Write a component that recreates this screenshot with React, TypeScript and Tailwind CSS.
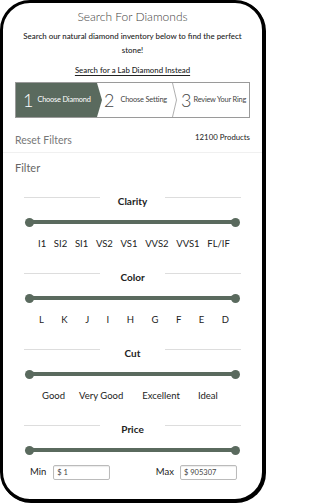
import React from "react";

const GREEN = "#5a6a5e";

function Header({ title }: { title: string }) {
  return (
    <div className="mx-[9px] flex items-center">
      <div className="h-px w-[76px] bg-[#dddddd] -translate-y-[3px]" />
      <div className="flex-1 text-center text-[10px] leading-[14px] font-bold text-[#222]">{title}</div>
      <div className="h-px w-[76px] bg-[#dddddd] -translate-y-[3px]" />
    </div>
  );
}

function Slider() {
  return (
    <div className="mx-[10px] mt-[9.5px] flex h-[10px] items-center">
      <div className="h-[9px] w-[9px] shrink-0 rounded-full bg-[#5a6a5e]" />
      <div className="-mx-[2px] h-[4px] flex-1 bg-[#5a6a5e]" />
      <div className="h-[9px] w-[9px] shrink-0 rounded-full bg-[#5a6a5e]" />
    </div>
  );
}

export default function App() {
  const clarity = ["I1", "SI2", "SI1", "VS2", "VS1", "VVS2", "VVS1", "FL/IF"];
  const color = ["L", "K", "J", "I", "H", "G", "F", "E", "D"];
  return (
    <div className="h-[504px] w-[267px] bg-white" style={{ fontFamily: "Lato, 'Open Sans', sans-serif" }}>
      <div className="h-[502px] w-[265px] overflow-hidden rounded-[30px] border-[3px] border-black bg-white px-[12px] shadow-[1px_1px_0_#000]">
        <div className="pt-[5px] text-center text-[12px] font-light leading-[18px] text-[#444]">Search For Diamonds</div>
        <div className="mt-[3px] px-[4px] text-center text-[7.9px] font-medium leading-[14px] text-[#222]">
          Search our natural diamond inventory below to find the perfect stone!
        </div>
        <div className="mt-[6px] text-center text-[7.8px] font-medium leading-[14px] text-[#222] underline underline-offset-2">
          Search for a Lab Diamond Instead
        </div>

        <div className="mt-[5px] flex h-[36px] border border-[#9a9a9a] bg-white">
          <div className="flex w-[81px] items-center whitespace-nowrap bg-[#5a6a5e] pl-[7px]">
            <span className="text-[18px] font-light leading-none text-white">1</span>
            <span className="ml-[4px] text-[7.4px] leading-none text-white tracking-[-0.2px]">Choose Diamond</span>
          </div>
          <svg width="5" height="34" viewBox="0 0 5 34" className="shrink-0">
            <polygon points="0,0 5,17 0,34" fill={GREEN} />
          </svg>
          <div className="flex flex-1 items-center whitespace-nowrap pl-[2px]">
            <span className="text-[18px] font-light leading-none text-[#444]">2</span>
            <span className="ml-[6px] text-[7.4px] leading-none text-[#444] tracking-[-0.2px]">Choose Setting</span>
          </div>
          <svg width="5" height="34" viewBox="0 0 5 34" className="shrink-0">
            <polyline points="0.5,0 4.5,17 0.5,34" fill="none" stroke="#9a9a9a" strokeWidth="0.8" />
          </svg>
          <div className="flex w-[72px] items-center whitespace-nowrap pl-[4px]">
            <span className="text-[18px] font-light leading-none text-[#444]">3</span>
            <span className="ml-[2px] text-[7.4px] leading-none text-[#444] tracking-[-0.2px]">Review Your Ring</span>
          </div>
        </div>

        <div className="-mx-[12px] mt-[14px] flex items-start justify-between border-b border-[#f0f0f0] px-[12px] pb-[4px]">
          <span className="text-[10.5px] leading-[16px] text-[#777]">Reset Filters</span>
          <span className="mt-[-1px] text-[7.8px] leading-[12px] text-[#222]">12100 Products</span>
        </div>
        <div className="mt-[7px] text-[11px] leading-[16px] text-[#666]">Filter</div>

        <div className="mt-[17.5px]">
          <Header title="Clarity" />
          <Slider />
          <div className="ml-[23px] mr-[20px] mt-[10px] flex justify-between text-[9.5px] leading-[14px] text-[#222]">
            {clarity.map((c) => (
              <span key={c}>{c}</span>
            ))}
          </div>
        </div>

        <div className="mt-[18.5px]">
          <Header title="Color" />
          <Slider />
          <div className="ml-[24px] mr-[21px] mt-[10px] flex justify-between text-[9.5px] leading-[14px] text-[#222]">
            {color.map((c) => (
              <span key={c}>{c}</span>
            ))}
          </div>
        </div>

        <div className="mt-[18.5px]">
          <Header title="Cut" />
          <Slider />
          <div className="mt-[10px] flex pl-[27px] text-[9.5px] leading-[14px] text-[#222]">
            <span>Good</span>
            <span className="ml-[14px]">Very Good</span>
            <span className="ml-[19px]">Excellent</span>
            <span className="ml-[18px]">Ideal</span>
          </div>
        </div>

        <div className="mt-[18.5px]">
          <Header title="Price" />
          <Slider />
          <div className="mt-[10px] flex items-center text-[9.5px] text-[#222]">
            <span className="ml-[15px]">Min</span>
            <div className="ml-[7px] flex h-[15px] w-[57px] items-center rounded-[2px] border border-[#bbbbbb] pl-[3px] text-[7.5px] text-[#444] shadow-[inset_0_1px_1px_rgba(0,0,0,0.08)]">
              $ 1
            </div>
            <span className="ml-auto">Max</span>
            <div className="ml-[6px] mr-[13px] flex h-[15px] w-[57px] items-center rounded-[2px] border border-[#bbbbbb] pl-[3px] text-[7.5px] text-[#444] shadow-[inset_0_1px_1px_rgba(0,0,0,0.08)]">
              $ 905307
            </div>
          </div>
        </div>
      </div>
    </div>
  );
}
